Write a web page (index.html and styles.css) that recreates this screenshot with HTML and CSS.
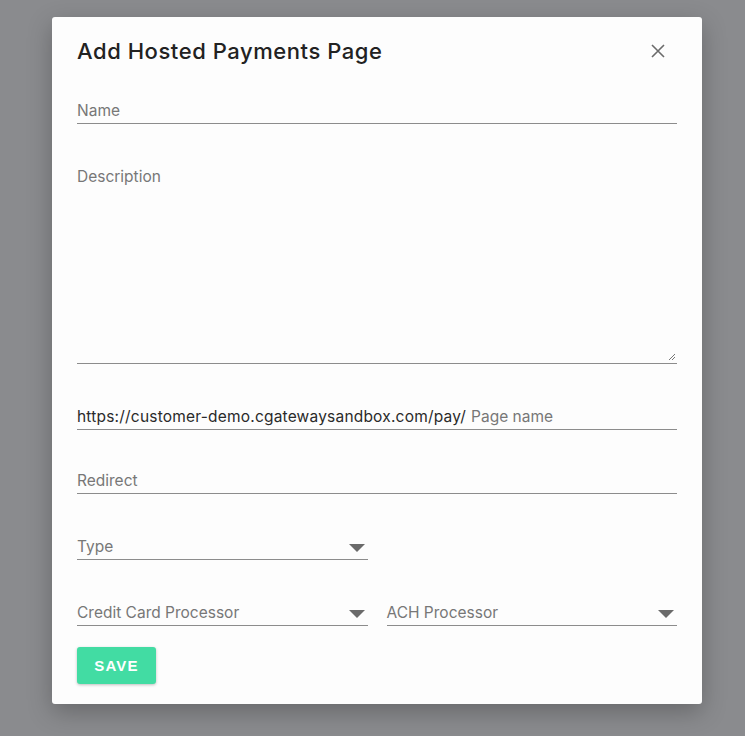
FILE: index.html
```html
<!DOCTYPE html>
<html>
<head>
<meta charset="utf-8">
<link rel="stylesheet" href="styles.css">
</head>
<body>
<div class="modal">
  <div class="header">
    <h1 class="title">Add Hosted Payments Page</h1>
    <button class="close" aria-label="close">
      <svg width="14" height="14" viewBox="0 0 14 14"><path d="M1 1L13 13M13 1L1 13" stroke="#6b6b6b" stroke-width="1.6" fill="none"/></svg>
    </button>
  </div>
  <div class="field name"><span class="ph">Name</span></div>
  <div class="field desc">
    <span class="ph">Description</span>
    <svg class="grip" width="8" height="8" viewBox="0 0 8 8"><path d="M7 1L1 7M7 4L4 7" stroke="#777" stroke-width="1" fill="none"/></svg>
  </div>
  <div class="field url"><span class="val">https://customer-demo.cgatewaysandbox.com/pay/</span><span class="ph">Page name</span></div>
  <div class="field redirect"><span class="ph">Redirect</span></div>
  <div class="row">
    <div class="field select half"><span class="ph">Type</span><span class="caret"></span></div>
  </div>
  <div class="row">
    <div class="field select half"><span class="ph">Credit Card Processor</span><span class="caret"></span></div>
    <div class="field select half"><span class="ph">ACH Processor</span><span class="caret"></span></div>
  </div>
  <button class="save">SAVE</button>
</div>
</body>
</html>
```
FILE: styles.css
```css
* { box-sizing: border-box; }
html, body { margin: 0; padding: 0; }
body {
  background: #8a8b8e;
  font-family: Inter, Roboto, sans-serif;
  width: 745px;
  height: 736px;
  overflow: hidden;
}
.modal {
  margin: 17px 0 0 52px;
  width: 650px;
  height: 687px;
  background: #fdfdfd;
  border-radius: 3px;
  box-shadow: 0 8px 24px rgba(0,0,0,0.25);
  padding: 0 25px;
  display: flex;
  flex-direction: column;
}
.header {
  display: flex;
  align-items: center;
  justify-content: space-between;
  height: 24px;
  margin-top: 22px;
}
.title {
  margin: 0;
  font-size: 22px;
  font-weight: 500;
  color: #222;
  letter-spacing: 0.55px;
}
.close {
  border: 0;
  background: none;
  padding: 0;
  margin-right: 12px;
  width: 14px;
  height: 14px;
  display: flex;
}
.field {
  position: relative;
  height: 26px;
  border-bottom: 1px solid #8c8c8c;
  display: flex;
  align-items: center;
  padding-top: 1px;
  font-size: 15.5px;
  color: #777;
  line-height: 20px;
}
.ph { color: #777; }
.name { margin-top: 35px; }
.desc {
  margin-top: 40px;
  height: 200px;
  align-items: flex-start;
  padding-top: 3px;
}
.grip { position: absolute; right: 1px; bottom: 2px; }
.url { margin-top: 40px; }
.url .val { color: #2a2a2a; margin-right: 5px; letter-spacing: 0.2px; }
.redirect { margin-top: 38px; }
.row {
  display: flex;
  gap: 19px;
  margin-top: 40px;
}
.half { width: 291px; }
.select { justify-content: space-between; }
.caret {
  width: 0; height: 0;
  border-left: 8px solid transparent;
  border-right: 8px solid transparent;
  border-top: 8px solid #6a6a6a;
  margin-right: 3px;
  margin-top: 1px;
}
.save {
  margin-top: 21px;
  align-self: flex-start;
  width: 79px;
  height: 37px;
  border: 0;
  border-radius: 3px;
  background: #42dca3;
  color: #fff;
  font-family: "Liberation Sans", Arial, sans-serif;
  font-weight: bold;
  font-size: 15px;
  letter-spacing: 1.2px;
  box-shadow: 0 1px 3px rgba(0,0,0,0.25);
}
```
